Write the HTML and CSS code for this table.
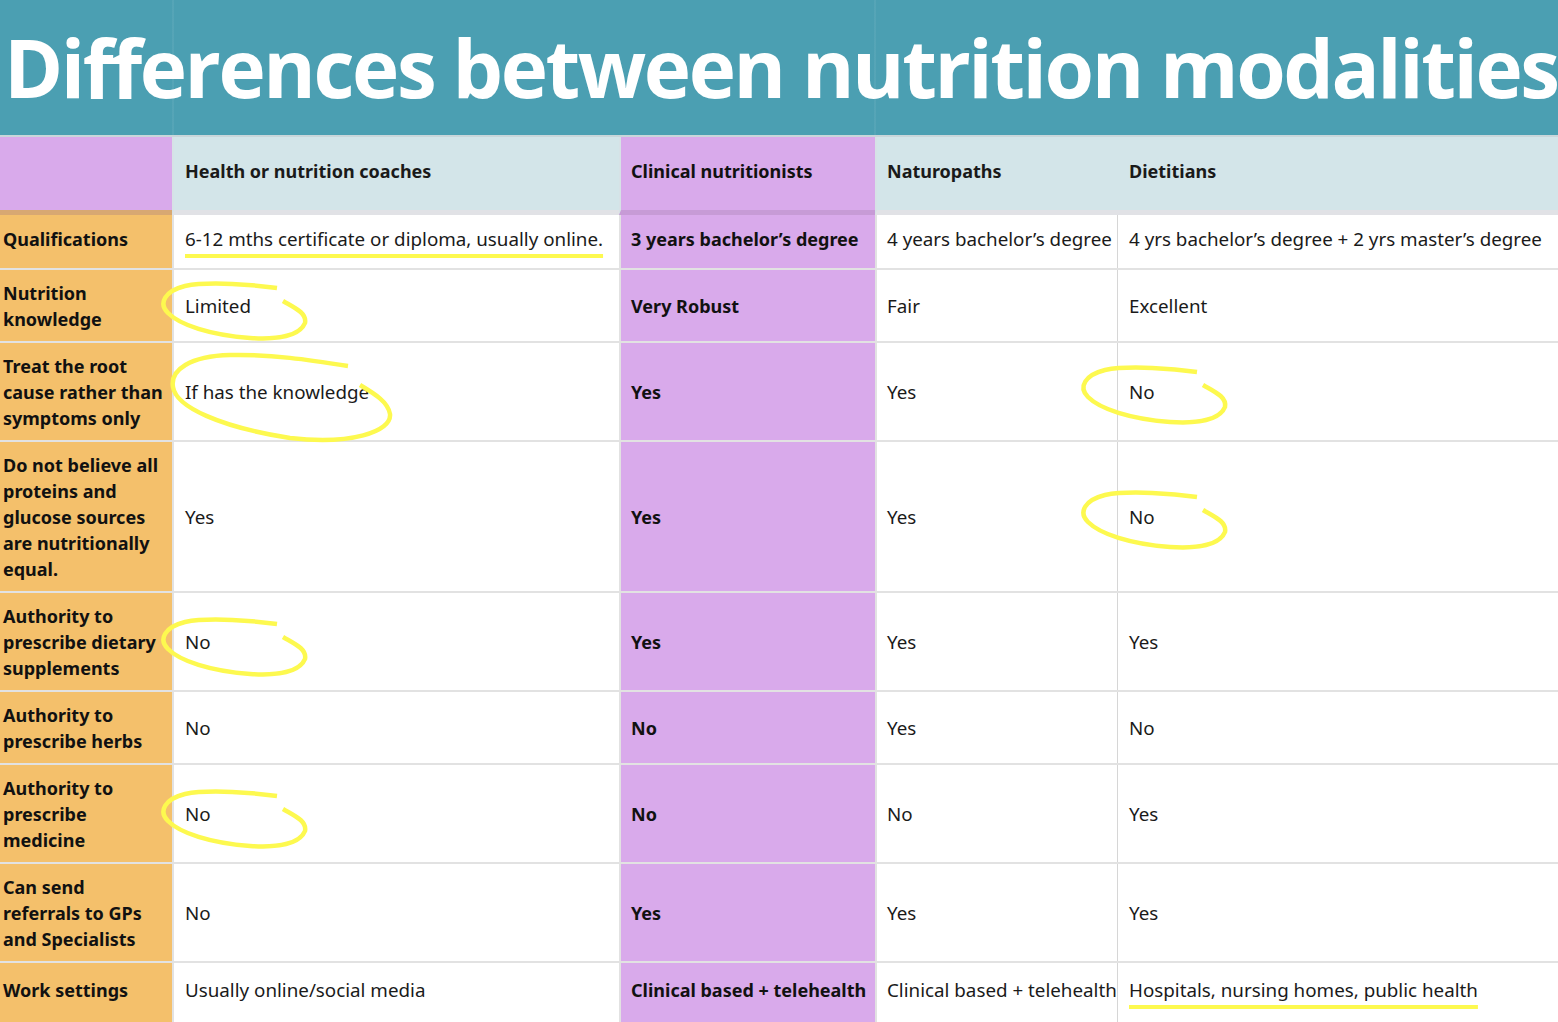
FILE: index.html
```html
<!DOCTYPE html>
<html lang="en">
<head>
<meta charset="utf-8">
<title>Differences between nutrition modalities</title>
<link rel="stylesheet" href="styles.css">
</head>
<body>
<div class="page">
  <header class="title-band">
    <h1 class="title">Differences between nutrition modalities</h1>
  </header>
  <div class="table">
    <div class="row head">
      <div class="cell label"></div>
      <div class="cell c2">Health or nutrition coaches</div>
      <div class="cell c3">Clinical nutritionists</div>
      <div class="cell c4">Naturopaths</div>
      <div class="cell c5">Dietitians</div>
    </div>
    <div class="row r-qual">
      <div class="cell label">Qualifications</div>
      <div class="cell c2"><span class="hl">6-12 mths certificate or diploma, usually online.</span></div>
      <div class="cell c3">3 years bachelor’s degree</div>
      <div class="cell c4">4 years bachelor’s degree</div>
      <div class="cell c5">4 yrs bachelor’s degree + 2 yrs master’s degree</div>
    </div>
    <div class="row">
      <div class="cell label">Nutrition<br>knowledge</div>
      <div class="cell c2"><span class="mark">Limited<svg class="circ small at-a" viewBox="0 0 150 60"><path d="M117,5 C95,2 50,-2 25,3 C5,8 -2,20 8,30 C20,42 50,52 90,55 C120,57 140,52 145,40 C147,30 135,25 123,18"/></svg></span></div>
      <div class="cell c3">Very Robust</div>
      <div class="cell c4">Fair</div>
      <div class="cell c5">Excellent</div>
    </div>
    <div class="row">
      <div class="cell label">Treat the root cause rather than symptoms only</div>
      <div class="cell c2"><span class="mark">If has the knowledge<svg class="circ big at-k" viewBox="0 0 225 92"><path d="M178,14 C140,8 100,2 60,3 C20,4 0,18 3,35 C6,55 50,75 120,86 C180,93 222,80 220,62 C218,50 205,42 190,33"/></svg></span></div>
      <div class="cell c3">Yes</div>
      <div class="cell c4">Yes</div>
      <div class="cell c5"><span class="mark">No<svg class="circ small at-b" viewBox="0 0 150 60"><path d="M117,5 C95,2 50,-2 25,3 C5,8 -2,20 8,30 C20,42 50,52 90,55 C120,57 140,52 145,40 C147,30 135,25 123,18"/></svg></span></div>
    </div>
    <div class="row">
      <div class="cell label">Do not believe all proteins and glucose sources are nutritionally equal.</div>
      <div class="cell c2">Yes</div>
      <div class="cell c3">Yes</div>
      <div class="cell c4">Yes</div>
      <div class="cell c5"><span class="mark">No<svg class="circ small at-b" viewBox="0 0 150 60"><path d="M117,5 C95,2 50,-2 25,3 C5,8 -2,20 8,30 C20,42 50,52 90,55 C120,57 140,52 145,40 C147,30 135,25 123,18"/></svg></span></div>
    </div>
    <div class="row">
      <div class="cell label">Authority to prescribe dietary supplements</div>
      <div class="cell c2"><span class="mark">No<svg class="circ small at-a" viewBox="0 0 150 60"><path d="M117,5 C95,2 50,-2 25,3 C5,8 -2,20 8,30 C20,42 50,52 90,55 C120,57 140,52 145,40 C147,30 135,25 123,18"/></svg></span></div>
      <div class="cell c3">Yes</div>
      <div class="cell c4">Yes</div>
      <div class="cell c5">Yes</div>
    </div>
    <div class="row">
      <div class="cell label">Authority to prescribe herbs</div>
      <div class="cell c2">No</div>
      <div class="cell c3">No</div>
      <div class="cell c4">Yes</div>
      <div class="cell c5">No</div>
    </div>
    <div class="row">
      <div class="cell label">Authority to prescribe medicine</div>
      <div class="cell c2"><span class="mark">No<svg class="circ small at-a" viewBox="0 0 150 60"><path d="M117,5 C95,2 50,-2 25,3 C5,8 -2,20 8,30 C20,42 50,52 90,55 C120,57 140,52 145,40 C147,30 135,25 123,18"/></svg></span></div>
      <div class="cell c3">No</div>
      <div class="cell c4">No</div>
      <div class="cell c5">Yes</div>
    </div>
    <div class="row">
      <div class="cell label">Can send referrals to GPs and Specialists</div>
      <div class="cell c2">No</div>
      <div class="cell c3">Yes</div>
      <div class="cell c4">Yes</div>
      <div class="cell c5">Yes</div>
    </div>
    <div class="row last">
      <div class="cell label">Work settings</div>
      <div class="cell c2">Usually online/social media</div>
      <div class="cell c3">Clinical based + telehealth</div>
      <div class="cell c4">Clinical based + telehealth</div>
      <div class="cell c5"><span class="hl">Hospitals, nursing homes, public health</span></div>
    </div>
  </div>
</div>
</body>
</html>
```

FILE: styles.css
```css
* { box-sizing: border-box; }
html, body { margin: 0; padding: 0; }
body {
  width: 1558px;
  height: 1022px;
  overflow: hidden;
  background: #ffffff;
  font-family: "Noto Sans", "Open Sans", "DejaVu Sans", sans-serif;
  color: #1a1a1a;
}
.page { width: 1558px; }

.title-band {
  height: 137px;
  background:
    linear-gradient(to right, transparent 172px, rgba(255,255,255,0.06) 172px, rgba(255,255,255,0.06) 174px, transparent 174px, transparent 874px, rgba(255,255,255,0.06) 874px, rgba(255,255,255,0.06) 876px, transparent 876px),
    #4b9fb2;
  border-bottom: 2px solid #c9d6da;
  overflow: hidden;
}
.title {
  margin: 0;
  padding: 22px 0 0 4px;
  font-family: "Open Sans", "Noto Sans", sans-serif;
  font-weight: 700;
  font-size: 80px;
  line-height: 90px;
  color: #ffffff;
  white-space: nowrap;
  letter-spacing: -2.45px;
}

.table { width: 1558px; }
.row {
  display: grid;
  grid-template-columns: 172px 447px 256px 242px 441px;
  border-bottom: 2px solid #e2e2e2;
}
.row.last { border-bottom: none; min-height: 60px; }
.cell {
  display: flex;
  align-items: center;
  font-size: 18.8px;
  line-height: 26px;
  padding: 9.5px 10px;
  white-space: nowrap;
}
.cell.label {
  background: #f4c06b;
  font-size: 18px;
  font-weight: 700;
  padding-left: 3px;
  padding-right: 8px;
  color: #111;
  white-space: normal;
}
.cell.c2 {
  border-left: 2px solid #e2e2e2;
  padding-left: 11px;
}
.cell.c3 {
  background: #d9aaeb;
  border-left: 2px solid #e2e2e2;
  font-size: 18px;
  font-weight: 700;
  padding-right: 4px;
  color: #111;
}
.cell.c4 {
  border-left: 2px solid #e2e2e2;
  padding-right: 2px;
}
.cell.c5 {
  border-left: 1px solid #d6d6d6;
  padding-left: 11px;
}
.row.last .cell { padding-top: 8px; padding-bottom: 14px; }

.row.head { border-bottom: none; }
.row.head .cell {
  height: 78px;
  padding-top: 10px;
  padding-bottom: 15px;
  font-size: 18px;
  background: #d3e5e9;
  font-weight: 700;
  border-left: none;
  border-bottom: 5px solid #e1e2e6;
}
.row.head .cell.label {
  background: #d9aaeb;
  border-bottom-color: #d8a872;
}
.row.head .cell.c2 { padding-left: 11px; border-left: 2px solid #d6e2e6; }
.row.head .cell.c3 {
  background: #d9aaeb;
  border-left: 2px solid #d6e2e6;
  border-bottom-color: #c79bd6;
}
.row.head .cell.c4 { border-left: 2px solid #d6e2e6; }
.row.head .cell.c5 { border-left: none; padding-left: 12px; }

.r-qual .cell { min-height: 53px; padding-top: 8px; padding-bottom: 14px; }

.hl {
  text-decoration-line: underline;
  text-decoration-color: #fdf94f;
  text-decoration-thickness: 4px;
  text-underline-offset: 8px;
  text-decoration-skip-ink: none;
}

.mark { position: relative; }
.circ {
  position: absolute;
  overflow: visible;
  fill: none;
  stroke: #fdf94f;
  stroke-width: 4.5px;
  stroke-linecap: butt;
  pointer-events: none;
}
.circ.small { width: 150px; height: 60px; }
.circ.big { width: 225px; height: 92px; }
.at-a { left: -25px; top: -10px; }
.at-k { left: -15px; top: -27px; }
.at-b { left: -49px; top: -12px; }
```
